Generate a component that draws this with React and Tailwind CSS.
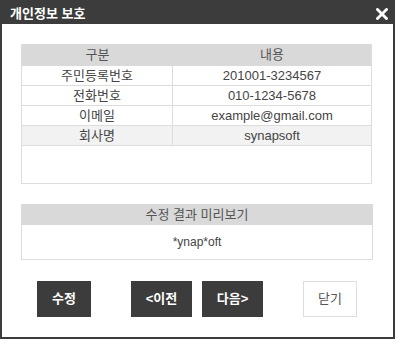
import React from "react";

const ROWS = [
  { label: "주민등록번호", value: "201001-3234567" },
  { label: "전화번호", value: "010-1234-5678" },
  { label: "이메일", value: "example@gmail.com" },
  { label: "회사명", value: "synapsoft", selected: true },
];

const FONT = "font-['Liberation_Sans','Noto_Sans_CJK_KR',sans-serif]";

export default function App() {
  return (
    <div className={`w-[395px] h-[339px] border-2 border-[#3c3c3c] bg-white flex flex-col ${FONT}`}>
      <div className="h-[22px] shrink-0 bg-[#3c3c3c] flex items-center justify-between pl-[8px] pr-[5px]">
        <span className="text-white text-[13px] font-bold leading-none">개인정보 보호</span>
        <svg width="12" height="12" viewBox="0 0 12 12" className="mt-[1px]">
          <path d="M1.5 1.5 L10.5 10.5 M10.5 1.5 L1.5 10.5" stroke="#fff" strokeWidth="2.8" strokeLinecap="square" />
        </svg>
      </div>

      <div className="pl-[19px] pr-[21px] pt-[20px]">
        <div className="h-[140px] border border-[#dddddd] border-t-0">
          <div className="grid grid-cols-[151px_1fr] h-[22px] bg-[#d9d9d9] text-[13px] text-[#555] items-center text-center">
            <div>구분</div>
            <div>내용</div>
          </div>
          {ROWS.map((r) => (
            <div
              key={r.label}
              className={`grid grid-cols-[151px_1fr] h-[20px] border-b border-[#dddddd] text-[13px] text-[#444] items-center text-center ${r.selected ? "bg-[#f2f2f2]" : ""}`}
            >
              <div className="h-full flex items-center justify-center border-r border-[#dddddd]">{r.label}</div>
              <div className="h-full flex items-center justify-center">{r.value}</div>
            </div>
          ))}
        </div>

        <div className="mt-[20px] w-[352px]">
          <div className="h-[21px] bg-[#d9d9d9] text-[13px] text-[#555] flex items-center justify-center">
            수정 결과 미리보기
          </div>
          <div className="h-[35px] border border-t-0 border-[#dddddd] text-[12px] text-[#444] flex items-center justify-center">
            *ynap*oft
          </div>
        </div>
      </div>

      <div className="flex pl-[35px] mt-[21px]">
        <button className="w-[54px] h-[36px] bg-[#3c3c3c] text-white text-[13px] font-bold">수정</button>
        <button className="ml-[40px] w-[61px] h-[36px] bg-[#3c3c3c] text-white text-[13px] font-bold">&lt;이전</button>
        <button className="ml-[10px] w-[61px] h-[36px] bg-[#3c3c3c] text-white text-[13px] font-bold">다음&gt;</button>
        <button className="ml-[40px] w-[54px] h-[36px] bg-white border border-[#dddddd] text-[#555] text-[13px]">닫기</button>
      </div>
    </div>
  );
}
